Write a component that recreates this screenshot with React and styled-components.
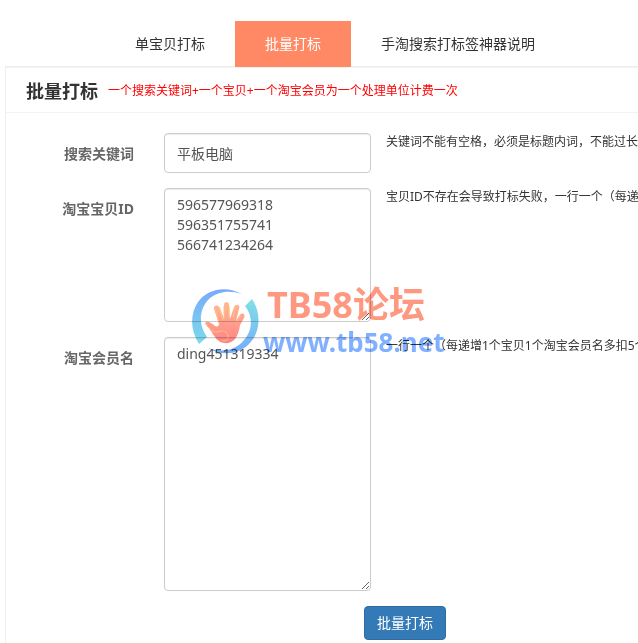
import { useState } from "react";
import styled, { createGlobalStyle } from "styled-components";

const GlobalStyle = createGlobalStyle`
	* {
		box-sizing: border-box;
	}
	body {
		margin: 0;
		overflow-x: hidden;
		background-color: #fff;
		color: #333;
		font-family: "Noto Sans", "Noto Sans CJK SC", sans-serif;
		font-size: 14px;
		line-height: 20px;
	}
	button, input, textarea {
		font-family: inherit;
		font-size: inherit;
		line-height: inherit;
	}
`;

const Page = styled.main`
	position: relative;
	padding: 21px 0 0 5px;
	overflow: hidden;
`;

const Tabs = styled.nav`
	display: flex;
	padding-left: 100px;
	box-shadow: inset 0 -1px 0 #eee;
`;

const Tab = styled.a`
	padding: 13px 30px;
	color: ${(props) => (props.$active ? "#fff" : "#333")};
	background-color: ${(props) => (props.$active ? "#ff8965" : "transparent")};
	text-decoration: none;
	white-space: nowrap;
`;

const Panel = styled.section`
	padding-bottom: 3px;
	border-top: 1px solid #f3f3f3;
	border-left: 1px solid #f0f0f0;
`;

const PanelHeader = styled.header`
	display: flex;
	align-items: center;
	gap: 10px;
	padding: 13px 0 11px 20px;
	border-bottom: 1px solid #f3f3f3;
	white-space: nowrap;
`;

const Title = styled.h1`
	margin: 0;
	font-size: 18px;
	font-weight: bold;
`;

const Notice = styled.span`
	color: #f00;
	font-size: 12px;
`;

const Form = styled.form`
	display: flex;
	flex-direction: column;
	gap: 15px;
	padding-top: 20px;
`;

const FieldRow = styled.div`
	display: grid;
	grid-template-columns: 128px minmax(160px, 207px) minmax(0, 1fr);
	column-gap: 30px;
	align-items: start;
`;

const Label = styled.label`
	padding-top: 11px;
	color: #666;
	font-weight: bold;
	text-align: right;
`;

const Input = styled.input`
	width: 100%;
	height: 40px;
	padding: 6px 12px;
	border: 1px solid #ccc;
	border-radius: 4px;
	box-shadow: inset 0 1px 1px rgba(0, 0, 0, 0.075);
	background-color: #fff;
	color: #555;
`;

const TextArea = styled.textarea`
	display: block;
	width: 100%;
	height: ${(props) => props.$height}px;
	padding: 6px 12px;
	border: 1px solid #ccc;
	border-radius: 4px;
	box-shadow: inset 0 1px 1px rgba(0, 0, 0, 0.075);
	background-color: #fff;
	color: #555;
	resize: both;
`;

const Hint = styled.span`
	margin-left: -15px;
	font-size: 12px;
	line-height: 17px;
	white-space: nowrap;
`;

const Actions = styled.div`
	padding-left: 358px;
`;

const Submit = styled.button`
	height: 34px;
	padding: 6px 12px;
	border: 1px solid #2e6da4;
	border-radius: 4px;
	background-color: #337ab7;
	color: #fff;
	cursor: pointer;
`;

const Watermark = styled.div`
	position: absolute;
	top: 287px;
	left: 191px;
	display: flex;
	gap: 4px;
	pointer-events: none;
	mix-blend-mode: multiply;
`;

const WatermarkText = styled.div`
	display: flex;
	flex-direction: column;
	font-weight: bold;
	white-space: nowrap;
`;

const Forum = styled.span`
	padding-left: 4px;
	color: #ff9880;
	font-size: 36px;
	line-height: 36px;
`;

const Site = styled.span`
	color: #80b0ff;
	font-size: 26px;
	line-height: 38px;
`;

function HandLogo() {
	return (
		<svg width="68" height="68" viewBox="0 0 68 68" fill="none" aria-hidden="true">
			<defs>
				<linearGradient id="ring" x1="0" y1="0" x2="0" y2="1">
					<stop offset="0" stopColor="#78a9fb" />
					<stop offset="1" stopColor="#7bdcea" />
				</linearGradient>
				<linearGradient id="ringRight" x1="0" y1="0" x2="0" y2="1">
					<stop offset="0" stopColor="#80e0e8" />
					<stop offset="1" stopColor="#78acfa" />
				</linearGradient>
				<linearGradient id="palm" x1="0" y1="0" x2="0" y2="1">
					<stop offset="0" stopColor="#ffb894" />
					<stop offset="1" stopColor="#ff8585" />
				</linearGradient>
			</defs>
			<path
				d="M51 7C35-2 16 2 7 15C-1 27-1 43 8 57L16 50C7 38 8 22 18 12C27 4 39 3 51 7Z"
				fill="url(#ring)"
			/>
			<path
				d="M61 12C71 27 69 46 58 57C47 68 30 69 17 61C32 66 45 63 53 53C62 43 62 29 54 19Z"
				fill="url(#ringRight)"
			/>
			<path
				d="M15 35C17 34 21 36 24 39C26 40 28 39 28 37L23 22C22 18 27 17 29 21L33 32L33 18C33 14 38 14 38 18L39 32L43 20C45 16 50 18 48 22L45 34L48 29C51 24 55 27 53 31L49 38C48 46 45 53 40 55C34 58 27 55 24 50C20 44 18 41 15 38C14 37 14 36 15 35Z"
				fill="url(#palm)"
			/>
			<path
				d="M15 37C19 43 22 45 26 45C33 42 38 46 37 51C36 54 33 55 31 53M24 21L28 36M28 21L32 33M33 19L33 32M38 19L38 31M44 20L42 31M49 29L46 35"
				stroke="#ffc37e"
				strokeWidth="1"
			/>
		</svg>
	);
}

export default function App() {
	const [keyword, setKeyword] = useState("平板电脑");
	const [items, setItems] = useState("596577969318\n596351755741\n566741234264");
	const [members, setMembers] = useState("ding451319334");

	return (
		<>
			<GlobalStyle />
			<Page>
				<Tabs>
					<Tab href="#single">单宝贝打标</Tab>
					<Tab href="#batch" $active>
						批量打标
					</Tab>
					<Tab href="#help">手淘搜索打标签神器说明</Tab>
				</Tabs>
				<Panel>
					<PanelHeader>
						<Title>批量打标</Title>
						<Notice>一个搜索关键词+一个宝贝+一个淘宝会员为一个处理单位计费一次</Notice>
					</PanelHeader>
					<Form onSubmit={(e) => e.preventDefault()}>
						<FieldRow>
							<Label htmlFor="keyword">搜索关键词</Label>
							<Input
								id="keyword"
								type="text"
								value={keyword}
								onChange={(e) => setKeyword(e.target.value)}
							/>
							<Hint>关键词不能有空格，必须是标题内词，不能过长</Hint>
						</FieldRow>
						<FieldRow>
							<Label htmlFor="items">淘宝宝贝ID</Label>
							<TextArea
								id="items"
								$height={134}
								value={items}
								onChange={(e) => setItems(e.target.value)}
							/>
							<Hint>宝贝ID不存在会导致打标失败，一行一个（每递</Hint>
						</FieldRow>
						<FieldRow>
							<Label htmlFor="members">淘宝会员名</Label>
							<TextArea
								id="members"
								$height={254}
								value={members}
								onChange={(e) => setMembers(e.target.value)}
							/>
							<Hint>一行一个（每递增1个宝贝1个淘宝会员名多扣5个</Hint>
						</FieldRow>
						<Actions>
							<Submit type="submit">批量打标</Submit>
						</Actions>
					</Form>
				</Panel>
				<Watermark>
					<HandLogo />
					<WatermarkText>
						<Forum>TB58论坛</Forum>
						<Site>www.tb58.net</Site>
					</WatermarkText>
				</Watermark>
			</Page>
		</>
	);
}
